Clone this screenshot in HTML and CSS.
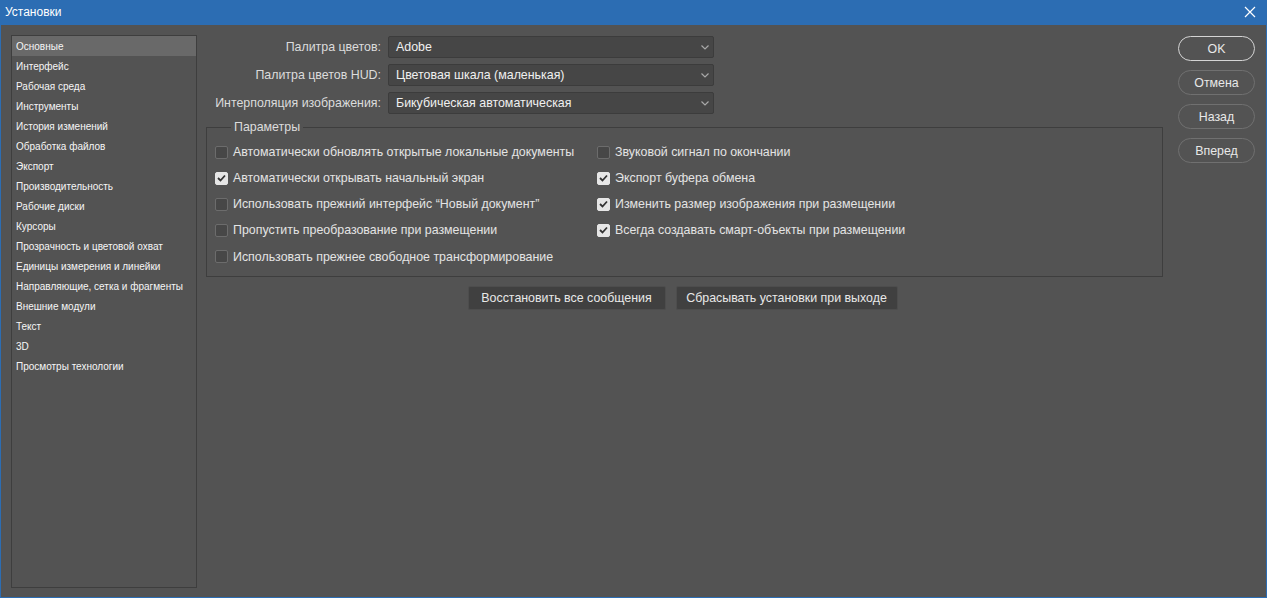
FILE: index.html
```html
<!DOCTYPE html>
<html lang="ru">
<head>
<meta charset="utf-8">
<title>Установки</title>
<link rel="stylesheet" href="styles.css">
</head>
<body>
<div class="window">
  <div class="titlebar">
    <span class="title">Установки</span>
    <svg class="close" width="12" height="12" viewBox="0 0 12 12"><path d="M1 1L11 11M11 1L1 11" stroke="#ffffff" stroke-width="1.2" fill="none"/></svg>
  </div>
  <div class="content">
    <ul class="sidebar">
      <li class="sel">Основные</li>
      <li>Интерфейс</li>
      <li>Рабочая среда</li>
      <li>Инструменты</li>
      <li>История изменений</li>
      <li>Обработка файлов</li>
      <li>Экспорт</li>
      <li>Производительность</li>
      <li>Рабочие диски</li>
      <li>Курсоры</li>
      <li>Прозрачность и цветовой охват</li>
      <li>Единицы измерения и линейки</li>
      <li>Направляющие, сетка и фрагменты</li>
      <li>Внешние модули</li>
      <li>Текст</li>
      <li>3D</li>
      <li>Просмотры технологии</li>
    </ul>
    <div class="main">
      <div class="field">
        <span class="label">Палитра цветов:</span>
        <div class="select"><span>Adobe</span><svg class="chev" width="8" height="5" viewBox="0 0 8 5"><path d="M0.5 0.5L4 4L7.5 0.5" stroke="#a8a8a8" stroke-width="1.2" fill="none"/></svg></div>
      </div>
      <div class="field">
        <span class="label">Палитра цветов HUD:</span>
        <div class="select"><span>Цветовая шкала (маленькая)</span><svg class="chev" width="8" height="5" viewBox="0 0 8 5"><path d="M0.5 0.5L4 4L7.5 0.5" stroke="#a8a8a8" stroke-width="1.2" fill="none"/></svg></div>
      </div>
      <div class="field">
        <span class="label">Интерполяция изображения:</span>
        <div class="select"><span>Бикубическая автоматическая</span><svg class="chev" width="8" height="5" viewBox="0 0 8 5"><path d="M0.5 0.5L4 4L7.5 0.5" stroke="#a8a8a8" stroke-width="1.2" fill="none"/></svg></div>
      </div>
      <fieldset class="params">
        <legend>Параметры</legend>
        <div class="grid">
          <div class="check"><span class="box"></span>Автоматически обновлять открытые локальные документы</div>
          <div class="check"><span class="box"></span>Звуковой сигнал по окончании</div>
          <div class="check"><span class="box on"><svg width="9" height="8" viewBox="0 0 9 8"><path d="M1 4L3.5 6.5L8 1.5" stroke="#333" stroke-width="1.8" fill="none"/></svg></span>Автоматически открывать начальный экран</div>
          <div class="check"><span class="box on"><svg width="9" height="8" viewBox="0 0 9 8"><path d="M1 4L3.5 6.5L8 1.5" stroke="#333" stroke-width="1.8" fill="none"/></svg></span>Экспорт буфера обмена</div>
          <div class="check"><span class="box"></span>Использовать прежний интерфейс “Новый документ”</div>
          <div class="check"><span class="box on"><svg width="9" height="8" viewBox="0 0 9 8"><path d="M1 4L3.5 6.5L8 1.5" stroke="#333" stroke-width="1.8" fill="none"/></svg></span>Изменить размер изображения при размещении</div>
          <div class="check"><span class="box"></span>Пропустить преобразование при размещении</div>
          <div class="check"><span class="box on"><svg width="9" height="8" viewBox="0 0 9 8"><path d="M1 4L3.5 6.5L8 1.5" stroke="#333" stroke-width="1.8" fill="none"/></svg></span>Всегда создавать смарт-объекты при размещении</div>
          <div class="check"><span class="box"></span>Использовать прежнее свободное трансформирование</div>
        </div>
      </fieldset>
      <div class="actions">
        <button class="btn b1">Восстановить все сообщения</button>
        <button class="btn b2">Сбрасывать установки при выходе</button>
      </div>
    </div>
    <div class="side-buttons">
      <button class="pill primary">OK</button>
      <button class="pill">Отмена</button>
      <button class="pill">Назад</button>
      <button class="pill">Вперед</button>
    </div>
  </div>
</div>
</body>
</html>
```
FILE: styles.css
```css
* { box-sizing: border-box; }
html, body { margin: 0; padding: 0; }
body {
  width: 1267px;
  height: 598px;
  overflow: hidden;
  background: #535353;
  font-family: "Liberation Sans", Arial, sans-serif;
  color: #e4e4e4;
}
.window {
  width: 1267px;
  height: 598px;
  border: 1px solid #2c6db3;
  border-top: 0;
  display: flex;
  flex-direction: column;
  background: #535353;
}
.titlebar {
  height: 25px;
  margin: 0 -1px;
  background: #2c6db3;
  display: flex;
  align-items: center;
  justify-content: space-between;
  padding: 0 11px 1px 5px;
  flex: none;
}
.title {
  color: #ffffff;
  font-size: 12px;
}
.close { display: block; }
.content {
  flex: 1;
  display: flex;
  padding: 10px 12px 9px 10px;
}
.sidebar {
  list-style: none;
  margin: 0;
  padding: 0;
  width: 186px;
  height: 553px;
  border: 1px solid #3e3e3e;
  flex: none;
}
.sidebar li {
  height: 20px;
  line-height: 22px;
  padding-left: 4px;
  font-size: 10px;
  color: #f6f6f6;
  white-space: nowrap;
}
.sidebar li.sel { background: #696969; }
.main {
  width: 957px;
  margin-left: 9px;
  flex: none;
  display: flex;
  flex-direction: column;
}
.field {
  display: flex;
  align-items: center;
  height: 22px;
  margin-bottom: 6px;
  margin-top: 1px;
}
.field + .field { margin-top: 0; }
.label {
  width: 176px;
  text-align: right;
  font-size: 12.4px;
  color: #dcdcdc;
  padding-right: 1px;
  white-space: nowrap;
}
.select {
  margin-left: 6px;
  width: 326px;
  height: 22px;
  background: #464646;
  border: 1px solid #3c3c3c;
  border-radius: 2px;
  display: flex;
  align-items: center;
  justify-content: space-between;
  padding: 0 4px 0 7px;
  font-size: 12.4px;
  color: #f0f0f0;
}
.chev { display: block; }
.params {
  margin: 0;
  padding: 4px 0 12px 8px;
  border: 1px solid #3e3e3e;
  height: 157px;
  min-width: 0;
}
.params legend {
  padding: 0 3px;
  margin-left: 16px;
  font-size: 12.4px;
  color: #dcdcdc;
}
.grid {
  display: grid;
  grid-template-columns: 382px 1fr;
  grid-template-rows: repeat(4, 26px) 27px;
  margin-top: 1px;
}
.check {
  display: flex;
  align-items: center;
  font-size: 12.4px;
  color: #e4e4e4;
  white-space: nowrap;
}
.box {
  width: 13px;
  height: 13px;
  border: 1px solid #6c6c6c;
  border-radius: 2px;
  background: #474747;
  margin-right: 5px;
  display: flex;
  align-items: center;
  justify-content: center;
  flex: none;
}
.box.on {
  background: #e6e6e6;
  border-color: #e6e6e6;
}
.box svg { display: block; }
.actions {
  display: flex;
  justify-content: center;
  gap: 10px;
  margin-top: 9px;
  padding-right: 4px;
}
.btn {
  height: 24px;
  padding: 0;
  background: #404040;
  border: 1px solid #4d4d4d;
  border-radius: 2px;
  color: #e8e8e8;
  font-family: "Liberation Sans", Arial, sans-serif;
  font-size: 12.4px;
  white-space: nowrap;
}
.b1 { width: 198px; }
.b2 { width: 222px; }
.side-buttons {
  margin-left: 15px;
  display: flex;
  flex-direction: column;
  gap: 9px;
  margin-top: 1px;
}
.pill {
  width: 77px;
  height: 25px;
  border-radius: 13px;
  border: 1px solid #707070;
  background: transparent;
  color: #e8e8e8;
  font-family: "Liberation Sans", Arial, sans-serif;
  font-size: 12.4px;
  padding: 0;
}
.pill.primary { border: 1.5px solid #d4d4d4; }
```
